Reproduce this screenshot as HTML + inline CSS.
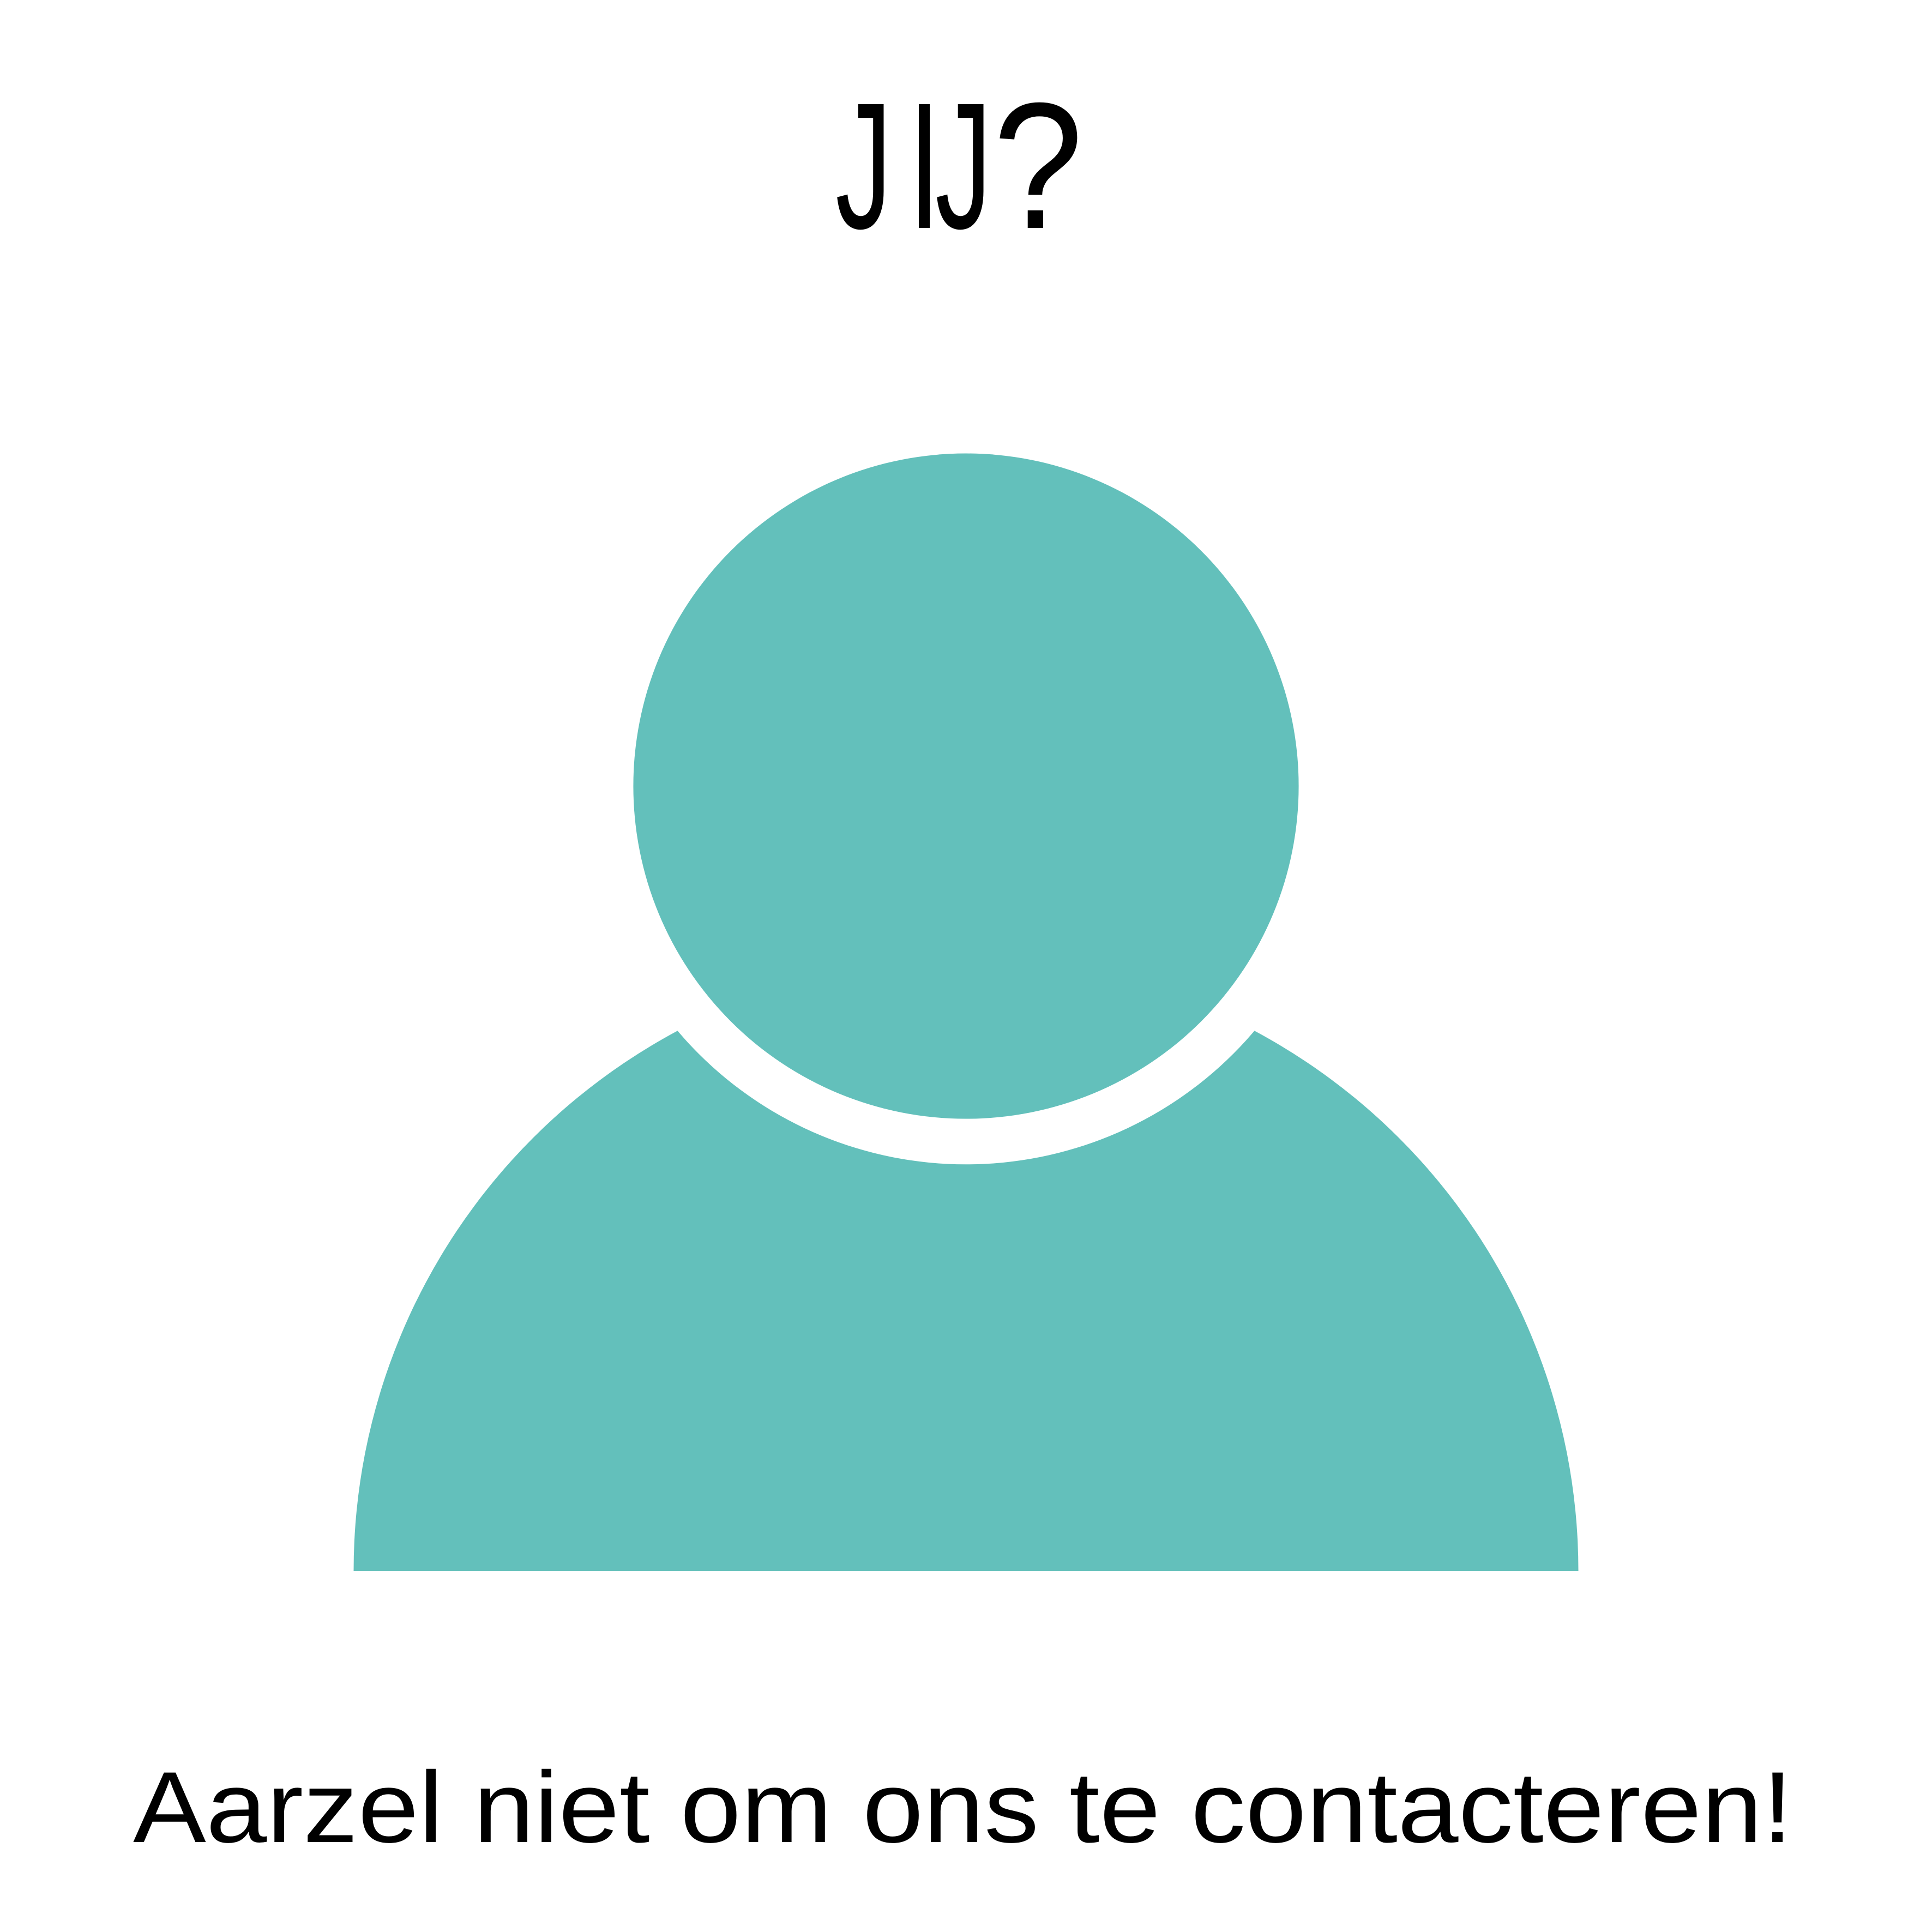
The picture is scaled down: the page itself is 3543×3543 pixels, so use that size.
<!DOCTYPE html>
<html><head><meta charset="utf-8"><style>
html,body{margin:0;padding:0;background:#fff;width:3543px;height:3543px;overflow:hidden}
svg{display:block;position:absolute;left:0;top:0}
</style></head><body>
<svg width="3543" height="3543" viewBox="0 0 1568 1568" xmlns="http://www.w3.org/2000/svg">
<defs>
<mask id="m"><rect x="0" y="0" width="1568" height="1568" fill="#fff"/><circle cx="784" cy="638" r="307" fill="#000"/><rect x="0" y="1275" width="1568" height="300" fill="#000"/></mask>
</defs>
<circle cx="784" cy="1275" r="497" fill="#63c0bb" mask="url(#m)"/>
<circle cx="784" cy="638" r="270" fill="#63c0bb"/>
<g font-family="Liberation Sans, sans-serif" font-size="146" fill="#000">
<text x="0" y="185" transform="translate(678,0) scale(0.63,1)">J</text>
<text x="0" y="185" transform="translate(737,0) scale(0.65,1)">I</text>
<text x="0" y="185" transform="translate(759,0) scale(0.63,1)">J</text>
<text x="0" y="185" transform="translate(806,0) scale(0.9,1)">?</text>
</g>
<text x="108" y="1495" font-family="Liberation Sans, sans-serif" font-size="82" textLength="1347" lengthAdjust="spacingAndGlyphs" fill="#000">Aarzel niet om ons te contacteren!</text>
</svg>
</body></html>
